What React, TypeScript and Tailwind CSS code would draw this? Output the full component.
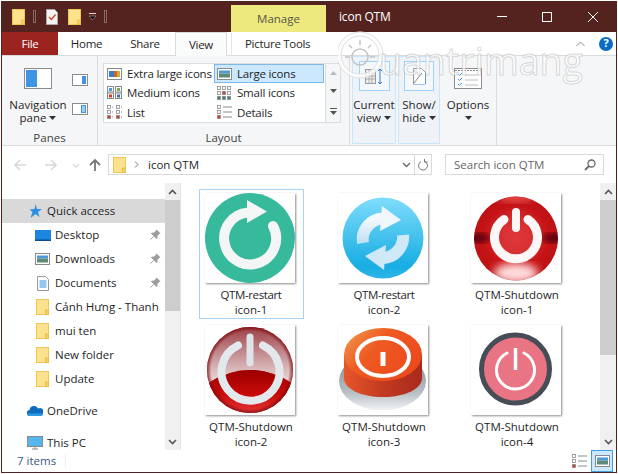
import React from "react";

const Folder = ({ className = "" }: { className?: string }) => (
  <svg viewBox="0 0 13 16" width="13" height="16" className={className}>
    <rect x="0.5" y="0.5" width="12" height="15" fill="#fde28e" stroke="#eec653" />
    <rect x="9.5" y="11" width="3" height="4.5" fill="#f7cf5e" stroke="#e5b93f" strokeWidth="0.7" />
  </svg>
);

const Caret = ({ className = "" }: { className?: string }) => (
  <svg viewBox="0 0 7 4" width="7" height="4" className={className}>
    <path d="M0 0h7L3.5 4z" fill="#333" />
  </svg>
);

const SmallView = ({ kind }: { kind: string }) => {
  const c = "#8a8a8a";
  if (kind === "xl")
    return (
      <svg width="15" height="12" viewBox="0 0 15 12">
        <rect x=".5" y=".5" width="14" height="11" fill="#fff" stroke={c} />
        <rect x="2" y="3" width="5" height="6" fill="#3a7fc8" />
        <rect x="7" y="3" width="3" height="6" fill="#d9602a" />
        <rect x="10" y="3" width="3" height="6" fill="#c8b040" />
      </svg>
    );
  if (kind === "lg")
    return (
      <svg width="15" height="12" viewBox="0 0 15 12">
        <rect x=".5" y=".5" width="14" height="11" fill="#fff" stroke={c} />
        <rect x="2" y="2.5" width="11" height="3" fill="#4c9ad8" />
        <rect x="2" y="5.5" width="11" height="4" fill="#5f8a78" />
      </svg>
    );
  if (kind === "md")
    return (
      <svg width="15" height="13" viewBox="0 0 15 13">
        <rect x=".5" y=".5" width="6" height="5.5" fill="#fff" stroke={c} />
        <rect x="8.5" y=".5" width="6" height="5.5" fill="#fff" stroke={c} />
        <rect x=".5" y="7" width="6" height="5.5" fill="#fff" stroke={c} />
        <rect x="8.5" y="7" width="6" height="5.5" fill="#fff" stroke={c} />
        <rect x="2" y="2" width="3" height="3" fill="#4c9ad8" />
        <rect x="10" y="2" width="3" height="3" fill="#7aa860" />
        <rect x="2" y="8.5" width="3" height="3" fill="#d83a2a" />
        <rect x="10" y="8.5" width="3" height="3" fill="#3a6fb8" />
      </svg>
    );
  if (kind === "sm")
    return (
      <svg width="15" height="14" viewBox="0 0 15 14">
        {[0, 5, 10].map((y) =>
          [0, 5, 10].map((x) => (
            <rect key={`${x}-${y}`} x={x + 0.5} y={y + 0.5} width="3" height="3" fill={x === 5 && y === 5 ? "#d83a2a" : y === 10 ? "#3a7f78" : "#fff"} stroke={c} strokeWidth=".8" />
          )),
        )}
      </svg>
    );
  if (kind === "list")
    return (
      <svg width="15" height="14" viewBox="0 0 15 14">
        {[0, 5, 10].map((y) =>
          [0, 9].map((x) => (
            <g key={`${x}-${y}`}>
              <rect x={x + 0.5} y={y + 0.5} width="3" height="3" fill={y === 10 ? "#d83a2a" : "#fff"} stroke={c} strokeWidth=".8" />
              <path d={`M${x + 5} ${y + 2}h1`} stroke={c} />
            </g>
          )),
        )}
      </svg>
    );
  return (
    <svg width="15" height="14" viewBox="0 0 15 14">
      {[0, 5, 10].map((y) => (
        <g key={y}>
          <rect x=".5" y={y + 0.5} width="3" height="3" fill={y === 10 ? "#d83a2a" : "#fff"} stroke={c} strokeWidth=".8" />
          <path d={`M6 ${y + 2}h9`} stroke={c} />
        </g>
      ))}
    </svg>
  );
};

const Item = ({ kind, label, active }: { kind: string; label: string; active?: boolean }) => (
  <div className={`flex h-5 w-[110px] items-center gap-[5px] pl-[3px] tracking-[-0.2px] ${active ? "bg-[#cce8ff] outline outline-1 -outline-offset-1 outline-[#7db8e8]" : ""}`}>
    <div className="flex w-[15px] justify-center">
      <SmallView kind={kind} />
    </div>
    <span className="whitespace-nowrap">{label}</span>
  </div>
);

const Pin = () => (
  <svg width="11" height="11" viewBox="0 0 11 11" className="absolute left-[148px] top-[6px]">
    <path d="M6.5 0.5l4 4-1.2.6-2 2 .2 2L6.6 10 1 4.4 1.900 3.500l2 .2 2-2z" fill="#9c9c9c" />
    <path d="M3.500 7.500L0.500 10.500" stroke="#9c9c9c" />
  </svg>
);

const NavRow = ({ icon, label, pin, cls = "pl-[32px]" }: { icon: React.ReactNode; label: string; pin?: boolean; cls?: string }) => (
  <div className={`relative flex h-6 items-center whitespace-nowrap ${cls}`}>
    <div className="mr-[4px] flex w-[17px] justify-center">{icon}</div>
    <span className="overflow-hidden">{label}</span>
    {pin && <Pin />}
  </div>
);

const ScrollBar = ({ thumb, className = "" }: { thumb: string; className?: string }) => (
  <div className={`relative flex w-[16px] shrink-0 flex-col bg-[#f0f0f0] ${className}`}>
    <div className="flex h-[17px] items-center justify-center">
      <svg width="9" height="6" viewBox="0 0 9 6"><path d="M1 5l3.500-3.500L8 5" fill="none" stroke="#555" strokeWidth="1.600" /></svg>
    </div>
    <div className={`bg-[#cdcdcd] ${thumb}`} />
    <div className="flex-1" />
    <div className="flex h-[17px] items-center justify-center">
      <svg width="9" height="6" viewBox="0 0 9 6"><path d="M1 1l3.500 3.500L8 1" fill="none" stroke="#555" strokeWidth="1.600" /></svg>
    </div>
  </div>
);

const Restart1 = () => (
  <svg viewBox="0 0 90 90" width="90" height="90">
    <circle cx="45" cy="45" r="45" fill="#37b99c" />
    <path d="M43 19.500A26 26 0 1 0 68 33" fill="none" stroke="#f4f6f6" strokeWidth="10" strokeLinecap="round" />
    <path d="M42 7l20 11.500L42 30z" fill="#f4f6f6" />
  </svg>
);

const Restart2 = () => (
  <svg viewBox="0 0 90 90" width="90" height="90">
    <defs>
      <linearGradient id="b1" x1="0" y1="0" x2="0" y2="1">
        <stop offset="0" stopColor="#7fdcfb" />
        <stop offset="0.85" stopColor="#18ade3" />
        <stop offset="1" stopColor="#2cb6e8" />
      </linearGradient>
      <linearGradient id="b2" x1="0" y1="0" x2="0" y2="1">
        <stop offset="0" stopColor="#f4f9fc" />
        <stop offset="1" stopColor="#bfe0f5" />
      </linearGradient>
    </defs>
    <circle cx="45" cy="45" r="40.500" fill="url(#b1)" />
    <path d="M25 50A21 21 0 0 1 45 25.500" fill="none" stroke="url(#b2)" strokeWidth="12" />
    <path d="M44 13l19 14-21 11z" fill="#f0f7fc" />
    <path d="M65 42A21 21 0 0 1 45 65" fill="none" stroke="#d0e9f8" strokeWidth="12" />
    <path d="M46 77L27 63l21-11z" fill="#cfe8f8" />
  </svg>
);

const Shutdown1 = () => (
  <svg viewBox="0 0 90 90" width="90" height="90">
    <defs>
      <radialGradient id="r1" cx="0.5" cy="0.5" r="0.5">
        <stop offset="0" stopColor="#d9272a" />
        <stop offset="0.55" stopColor="#cc1417" />
        <stop offset="1" stopColor="#bd1215" />
      </radialGradient>
      <filter id="f1"><feGaussianBlur stdDeviation="4" /></filter>
      <filter id="f2"><feGaussianBlur stdDeviation="3" /></filter>
      <clipPath id="c1"><circle cx="45" cy="45.500" r="42" /></clipPath>
    </defs>
    <circle cx="45" cy="45.500" r="42" fill="url(#r1)" />
    <g clipPath="url(#c1)">
      <ellipse cx="6" cy="45" rx="14" ry="5" fill="#5c0608" filter="url(#f2)" />
      <ellipse cx="84" cy="45" rx="14" ry="5" fill="#5c0608" filter="url(#f2)" />
      <ellipse cx="45" cy="80" rx="22" ry="10" fill="#ffdcdc" filter="url(#f1)" />
      <ellipse cx="45" cy="44" rx="26" ry="26" fill="#f07070" opacity=".25" filter="url(#f1)" />
      <ellipse cx="45" cy="5" rx="18" ry="5" fill="#f05a5a" opacity=".7" filter="url(#f2)" />
    </g>
    <path d="M33 26.500A21.500 21.500 0 1 0 57 26.500" fill="none" stroke="#fdf6f6" strokeWidth="9" strokeLinecap="round" />
    <path d="M45 19v16" stroke="#fdf6f6" strokeWidth="8" strokeLinecap="round" />
  </svg>
);

const Shutdown2 = () => (
  <svg viewBox="0 0 90 90" width="90" height="90">
    <defs>
      <linearGradient id="s1" x1="0" y1="0" x2="0" y2="1">
        <stop offset="0" stopColor="#9a3a40" />
        <stop offset="0.55" stopColor="#c99a9c" />
        <stop offset="1" stopColor="#f0e2e2" />
      </linearGradient>
      <linearGradient id="s2" x1="0" y1="0" x2="0" y2="1">
        <stop offset="0" stopColor="#9c0000" />
        <stop offset="0.55" stopColor="#c90a0a" />
        <stop offset="1" stopColor="#e83a3a" />
      </linearGradient>
      <radialGradient id="s3" cx="0.5" cy="0.5" r="0.5">
        <stop offset="0.9" stopColor="#8a0a10" stopOpacity="0" />
        <stop offset="1" stopColor="#7a0a10" stopOpacity=".8" />
      </radialGradient>
      <clipPath id="c2"><circle cx="45" cy="45" r="43" /></clipPath>
    </defs>
    <circle cx="45" cy="45" r="43" fill="#b02020" />
    <g clipPath="url(#c2)">
      <path d="M0 0h90v60Q45 30 0 60z" fill="url(#s1)" />
      <path d="M0 60Q45 30 90 60V90H0z" fill="url(#s2)" />
    </g>
    <circle cx="45" cy="45" r="43" fill="url(#s3)" />
    <path d="M33 20.500A29 29 0 1 0 58 20.500" fill="none" stroke="#e2e8ec" strokeWidth="8" strokeLinecap="round" />
    <path d="M45 12v26" stroke="#dde4e8" strokeWidth="7" strokeLinecap="round" />
  </svg>
);

const Shutdown3 = () => (
  <svg viewBox="0 0 90 90" width="90" height="90">
    <defs>
      <linearGradient id="o1" x1="0" y1="0" x2="1" y2="0.6">
        <stop offset="0" stopColor="#f0a050" />
        <stop offset="0.45" stopColor="#ee5a22" />
        <stop offset="1" stopColor="#ec4a1c" />
      </linearGradient>
      <linearGradient id="o2" x1="0" y1="0" x2="1" y2="0">
        <stop offset="0" stopColor="#e8562a" />
        <stop offset="0.5" stopColor="#c23a22" />
        <stop offset="1" stopColor="#a82a1c" />
      </linearGradient>
      <linearGradient id="o3" x1="0" y1="0" x2="0" y2="1">
        <stop offset="0" stopColor="#777f87" />
        <stop offset="0.7" stopColor="#b9bfc5" />
        <stop offset="1" stopColor="#f2f4f6" />
      </linearGradient>
    </defs>
    <ellipse cx="44.500" cy="56" rx="43.500" ry="29.500" fill="url(#o3)" />
    <path d="M6 30v23c0 11 17 19 39 19s39-8 39-19V30z" fill="url(#o2)" />
    <ellipse cx="45" cy="29.500" rx="39" ry="26.500" fill="url(#o1)" />
    <ellipse cx="45" cy="32" rx="26" ry="19" fill="none" stroke="#fff" strokeWidth="4" />
    <rect x="42.500" y="27" width="5" height="14" fill="#fff" />
  </svg>
);

const Shutdown4 = () => (
  <svg viewBox="0 0 90 90" width="90" height="90">
    <circle cx="44.500" cy="44" r="34" fill="#e87484" stroke="#464d57" strokeWidth="5" />
    <path d="M36 28A19 19 0 1 0 53 28" fill="none" stroke="#fff" strokeWidth="3" strokeLinecap="round" />
    <path d="M44.500 23v22" stroke="#fff" strokeWidth="3.500" />
  </svg>
);

const Thumb = ({ children, l1, l2, sel }: { children: React.ReactNode; l1: string; l2: string; sel?: boolean }) => (
  <div className={`flex h-[130px] w-[105px] flex-col items-center pr-[3px] pt-[4px] ${sel ? "outline outline-1 -outline-offset-1 outline-[#a9d2f3]" : ""}`}>
    <div className="h-[90px] w-[90px] bg-white shadow-[1px_1px_2px_rgba(0,0,0,0.45)]">{children}</div>
    <div className="ml-[2px] mt-[4px] text-center leading-[15px]">
      <div className={l1 === "QTM-restart" ? "tracking-[-0.4px]" : ""}>{l1}</div>
      <div>{l2}</div>
    </div>
  </div>
);

const TallLabel = ({ a, b, caret = true }: { a: string; b: string; caret?: boolean }) => (
  <div className="flex flex-col items-center leading-[13px]">
    <span>{a}</span>
    <span className="flex h-[13px] items-center gap-[3px]">
      {b}
      {caret && <Caret />}
    </span>
  </div>
);

export default function App() {
  return (
    <div
      className="relative ml-px mt-px flex h-[472px] w-[616px] flex-col overflow-hidden border border-[#55231f] bg-white text-[11.5px] text-[#1f1f1f]"
      style={{ fontFamily: '"Open Sans","Noto Sans",sans-serif' }}
    >
      {/* title bar */}
      <div className="flex h-[30px] shrink-0 items-end bg-[#55231f]">
        <div className="flex h-[30px] w-[229px] items-center pb-[1px]">
          <Folder className="ml-[10px]" />
          <div className="ml-[8px] h-[13px] w-[3px] border border-[#8a6a66]" />
          <svg width="12" height="16" viewBox="0 0 12 16" className="ml-[10px]">
            <path d="M.5.500h8l3 3v12H.5z" fill="#f4f4f4" stroke="#aaa" />
            <path d="M3 8l2.500 2.500L9.500 5.500" fill="none" stroke="#d8402a" strokeWidth="1.300" />
          </svg>
          <Folder className="ml-[10px]" />
          <svg width="7" height="8" viewBox="0 0 7 8" className="ml-[8px]">
            <path d="M0 0h7v1H0z" fill="#ddd" />
            <path d="M0 3h7L3.500 7z" fill="#111" stroke="#ddd" strokeWidth=".4" />
          </svg>
          <div className="ml-[8px] h-[13px] w-[3px] border border-[#8a6a66]" />
        </div>
        <div className="flex h-[27px] w-[95px] items-center justify-center bg-[#eee97e] text-[#55554a]">Manage</div>
        <div className="flex h-[30px] flex-1 items-center pl-[13px] text-[12px] tracking-[-0.2px] text-white">icon QTM</div>
        <div className="flex h-[30px] items-center">
          <svg width="120" height="14" viewBox="0 0 120 14">
            <path d="M1 6.500h10" stroke="#fff" />
            <rect x="46.500" y="2.500" width="9" height="9" fill="none" stroke="#fff" />
            <path d="M92 2l10 10M102 2L92 12" stroke="#fff" />
          </svg>
        </div>
      </div>

      {/* tabs */}
      <div className="flex h-[23px] shrink-0 items-stretch bg-white tracking-[-0.3px]">
        <div className="flex w-[56px] items-center justify-center bg-[#9b2420] text-white">File</div>
        <div className="flex w-[57px] items-center justify-center">Home</div>
        <div className="flex w-[60px] items-center justify-center">Share</div>
        <div className="z-10 -mb-px flex w-[52px] items-center justify-center border-x border-t border-[#dadbdc] bg-[#fafbfb]">View</div>
        <div className="ml-[4px] mt-[1px] w-px bg-[#e4e4e4]" />
        <div className="ml-[13px] flex items-center">Picture Tools</div>
        <div className="flex-1" />
        <div className="flex items-center">
          <svg width="9" height="6" viewBox="0 0 9 6" className="mr-[14px]"><path d="M.5 5L4.500 1l4 4" fill="none" stroke="#888" /></svg>
          <div className="mr-[3px] flex h-[14px] w-[14px] items-center justify-center rounded-full bg-[#0a6cc4] text-[11px] font-bold text-white">?</div>
        </div>
      </div>

      {/* ribbon */}
      <div className="flex h-[91px] shrink-0 border-y border-[#dadbdc] bg-[#f5f6f7]">
        <div className="flex h-[89px] w-[96px] flex-col border-r border-[#dadbdc]">
          <div className="flex flex-1">
            <div className="ml-[6px] flex w-[60px] flex-col items-center pt-[12px]">
              <svg width="28" height="21" viewBox="0 0 28 21">
                <rect x=".5" y=".5" width="27" height="20" fill="#fff" stroke="#8c8c8c" />
                <rect x="2" y="2" width="11" height="17" fill="#3f95e4" />
              </svg>
              <div className="mt-[9px]">
                <TallLabel a="Navigation" b="pane" />
              </div>
            </div>
            <div className="ml-[4px] flex flex-col pt-[18px]">
              <svg width="16" height="12" viewBox="0 0 16 12">
                <rect x=".5" y=".5" width="15" height="11" fill="#fff" stroke="#8c8c8c" />
                <rect x="10" y="2" width="4" height="8" fill="#3f95e4" />
              </svg>
              <svg width="16" height="12" viewBox="0 0 16 12" className="mt-[17px]">
                <rect x=".5" y=".5" width="15" height="11" fill="#fff" stroke="#8c8c8c" />
                <rect x="9" y="2" width="5" height="8" fill="#3f95e4" />
                <path d="M10 4h3M10 6h3M10 8h3" stroke="#fff" />
              </svg>
            </div>
          </div>
          <div className="h-[15px] text-center leading-[15px] text-[#444]">Panes</div>
        </div>

        <div className="flex h-[89px] w-[252px] flex-col border-r border-[#dadbdc]">
          <div className="ml-[5px] mt-[7px] flex h-[60px] w-[238px] border border-[#dadbdc] bg-white">
            <div className="flex flex-col">
              <Item kind="xl" label="Extra large icons" />
              <Item kind="md" label="Medium icons" />
              <Item kind="list" label="List" />
            </div>
            <div className="flex flex-col">
              <Item kind="lg" label="Large icons" active />
              <Item kind="sm" label="Small icons" />
              <Item kind="det" label="Details" />
            </div>
            <div className="ml-auto flex w-[15px] flex-col items-center justify-around border-l border-[#dadbdc] bg-[#f5f6f7]">
              <svg width="7" height="4" viewBox="0 0 7 4"><path d="M0 4h7L3.500 0z" fill="#bbb" /></svg>
              <svg width="7" height="4" viewBox="0 0 7 4"><path d="M0 0h7L3.500 4z" fill="#555" /></svg>
              <svg width="7" height="7" viewBox="0 0 7 7"><path d="M0 .500h7" stroke="#555" /><path d="M0 3h7L3.500 7z" fill="#555" /></svg>
            </div>
          </div>
          <div className="mt-auto h-[15px] text-center leading-[15px] text-[#444]">Layout</div>
        </div>

        <div className="ml-[2px] flex h-[88px] w-[44px] flex-col items-center border border-[#cbe6fa] bg-[#eff3f7] pt-[4px]">
          <div className="flex h-[30px] w-[31px] items-center justify-center border border-[#9ad4f8] bg-[#f5f8fb]">
            <svg width="18" height="17" viewBox="0 0 18 17">
              <rect x=".5" y="1.500" width="10" height="14" fill="#eee" stroke="#999" />
              <path d="M1 5h9M1 8h9M1 11h9M4 2v13M7 2v13" stroke="#aaa" />
              <path d="M15 1v15M13 3l2-2 2 2M13 14l2 2 2-2" fill="none" stroke="#2a7fd0" />
            </svg>
          </div>
          <div className="mt-[7px]">
            <TallLabel a="Current" b="view" />
          </div>
        </div>
        <div className="ml-[2px] flex h-[88px] w-[42px] flex-col items-center border border-[#cbe6fa] bg-[#eff3f7] pt-[4px]">
          <div className="flex h-[30px] w-[30px] items-center justify-center border border-[#9ad4f8] bg-[#f5f8fb]">
            <svg width="13" height="17" viewBox="0 0 13 17">
              <path d="M.5 16V.500h8l4 4V16" fill="#fff" stroke="#999" />
              <path d="M.5 16.500h12M12.500 5v11" stroke="#3f95e4" strokeDasharray="1 1" />
              <path d="M1 15L9 5" stroke="#888" />
            </svg>
          </div>
          <div className="mt-[7px]">
            <TallLabel a="Show/" b="hide" />
          </div>
        </div>
        <div className="flex h-[89px] w-[57px] flex-col items-center border-r border-[#dadbdc] pt-[12px]">
          <svg width="28" height="21" viewBox="0 0 28 21">
            <rect x=".5" y=".5" width="27" height="20" fill="#fff" stroke="#8c8c8c" />
            <path d="M1 2.500h26" stroke="#8c8c8c" strokeDasharray="2 1" />
            <path d="M4 6l1.500 1.500L8 5M4 11l1.500 1.500L8 10M4 16l1.500 1.500L8 15" fill="none" stroke="#3f95e4" />
            <path d="M11 7h13M11 12h13M11 17h13" stroke="#bbb" />
          </svg>
          <div className="mt-[9px]">
            <div className="flex flex-col items-center leading-[13px]">
              <span>Options</span>
              <span className="flex h-[13px] items-center"><Caret /></span>
            </div>
          </div>
        </div>
      </div>

      {/* address */}
      <div className="flex h-[37px] shrink-0 items-center bg-white">
        <svg width="100" height="14" viewBox="0 0 100 14" className="ml-[11px] shrink-0">
          <path d="M2 7h11M7 2L2 7l5 5" fill="none" stroke="#d8d8d8" strokeWidth="1.600" />
          <path d="M32 7h11M38 2l5 5-5 5" fill="none" stroke="#d8d8d8" strokeWidth="1.600" />
          <path d="M60 6l3 3 3-3" fill="none" stroke="#d8d8d8" strokeWidth="1.300" />
          <path d="M82 13V2M77 7l5-5 5 5" fill="none" stroke="#777" strokeWidth="1.800" />
        </svg>
        <div className="ml-[-5px] flex h-[21px] w-[324px] items-center border border-[#d9d9d9]">
          <Folder className="ml-[4px]" />
          <svg width="5" height="7" viewBox="0 0 5 7" className="ml-[8px]"><path d="M1 .500l3 3-3 3" fill="none" stroke="#777" /></svg>
          <span className="ml-[9px]">icon QTM</span>
          <svg width="9" height="6" viewBox="0 0 9 6" className="ml-auto mr-[3px]"><path d="M1 1l3.500 3.500L8 1" fill="none" stroke="#666" strokeWidth="1.300" /></svg>
          <div className="flex h-full w-[17px] items-center justify-center border-l border-[#d9d9d9]">
            <svg width="11" height="12" viewBox="0 0 11 12"><path d="M3 2.500a4.500 4.500 0 1 0 4 0M6.500 0v3h3" fill="none" stroke="#777" /></svg>
          </div>
        </div>
        <div className="ml-[13px] flex h-[21px] w-[159px] items-center border border-[#d9d9d9] pl-[8px] text-[#666]">
          <span>Search icon QTM</span>
          <svg width="12" height="12" viewBox="0 0 12 12" className="ml-auto mr-[7px]">
            <circle cx="7.500" cy="4.500" r="3.500" fill="none" stroke="#666" strokeWidth="1.300" />
            <path d="M5 7L1 11" stroke="#666" strokeWidth="1.800" />
          </svg>
        </div>
      </div>

      {/* main */}
      <div className="flex min-h-0 flex-1">
        <div className="relative w-[163px] shrink-0 overflow-hidden pt-[16px]">
          <NavRow
            cls="pl-[24px] bg-[#d9d9d9]"
            icon={<svg width="15" height="14" viewBox="0 0 15 14"><path d="M8.500 0l1.500 5h5l-4 3 1.500 5-4-3-5 4 2-6-3-2.500 5-.5z" fill="#2e8fe0" /></svg>}
            label="Quick access"
          />
          <NavRow pin icon={<svg width="16" height="11" viewBox="0 0 16 11"><rect width="16" height="11" fill="#1c86e0" /><rect y="9.500" width="16" height="1.500" fill="#0a4a90" /></svg>} label="Desktop" />
          <NavRow pin icon={<SmallView kind="lg" />} label="Downloads" />
          <NavRow pin icon={<svg width="12" height="15" viewBox="0 0 12 15"><path d="M.5.500h8l3 3v11H.5z" fill="#fff" stroke="#999" /><path d="M2.500 5h7M2.500 7h7M2.500 9h7M2.500 11h7" stroke="#2e8fe0" /></svg>} label="Documents" />
          <NavRow icon={<Folder />} label="Cảnh Hưng - Thanh" />
          <NavRow icon={<Folder />} label="mui ten" />
          <NavRow icon={<Folder />} label="New folder" />
          <NavRow icon={<Folder />} label="Update" />
          <div className="mt-[8px]">
            <NavRow cls="pl-[24px]" icon={<svg width="16" height="10" viewBox="0 0 16 10"><path d="M3 10a3 3 0 0 1-.500-6 4.500 4.500 0 0 1 8.500-1.500A3.500 3.500 0 0 1 16 7q0 3-3 3z" fill="#0f6cbd" /><path d="M0 7.500h16V8a2 2 0 0 1-2 2H3a3 3 0 0 1-3-2.500z" fill="#2e9be6" /></svg>} label="OneDrive" />
          </div>
          <div className="mt-[8px]">
            <NavRow cls="pl-[24px]" icon={<svg width="16" height="14" viewBox="0 0 16 14"><rect x=".5" y=".5" width="15" height="10" fill="#55b8ec" stroke="#8a8a8a" /><path d="M5 13h6M8 11v2" stroke="#8a8a8a" /></svg>} label="This PC" />
          </div>
        </div>
        <ScrollBar thumb="h-[111px]" className="border-r border-[#e4e4e4]" />
        <div className="min-w-0 flex-1 overflow-hidden pl-[18px] pt-[6px]">
          <div className="grid grid-cols-[105px_105px_105px] gap-x-[28px] gap-y-[2px]">
            <Thumb sel l1="QTM-restart" l2="icon-1"><Restart1 /></Thumb>
            <Thumb l1="QTM-restart" l2="icon-2"><Restart2 /></Thumb>
            <Thumb l1="QTM-Shutdown" l2="icon-1"><Shutdown1 /></Thumb>
            <Thumb l1="QTM-Shutdown" l2="icon-2"><Shutdown2 /></Thumb>
            <Thumb l1="QTM-Shutdown" l2="icon-3"><Shutdown3 /></Thumb>
            <Thumb l1="QTM-Shutdown" l2="icon-4"><Shutdown4 /></Thumb>
          </div>
        </div>
        <ScrollBar thumb="h-[155px]" />
      </div>

      {/* status */}
      <div className="flex h-[22px] shrink-0 items-center bg-white text-[#3a5a80]">
        <span className="ml-[15px]">7 items</span>
        <div className="ml-[9px] h-[14px] w-px bg-[#eee]" />
        <div className="ml-auto flex items-center">
          <SmallView kind="det" />
          <div className="ml-[4px] mr-[3px] flex h-[22px] w-[22px] items-center justify-center border border-[#3f9fe0] bg-[#cce8ff]">
            <SmallView kind="lg" />
          </div>
        </div>
      </div>

      {/* watermark */}
      <div className="pointer-events-none absolute left-[336px] top-[29px] flex items-end">
        <svg width="46" height="52" viewBox="0 0 46 52">
          <circle cx="22" cy="24" r="21" fill="none" stroke="#fff" strokeWidth="5" opacity=".8" />
          <circle cx="22" cy="24" r="23" fill="none" stroke="#c4c4c4" strokeWidth="1" opacity=".6" />
          <circle cx="22" cy="24" r="19" fill="none" stroke="#c4c4c4" strokeWidth="1" opacity=".6" />
          <circle cx="22" cy="26" r="8" fill="none" stroke="#c4c4c4" strokeWidth="1.500" />
          <path d="M22 9v5M11 14l3 3M33 14l-3 3M7 26h5M32 26h5" stroke="#c4c4c4" strokeWidth="1.500" />
        </svg>
        <span className="ml-[-5px] text-[37.5px] leading-[44px] text-white/70 [-webkit-text-stroke:1px_rgba(170,170,170,0.45)]">uantrimang</span>
      </div>
    </div>
  );
}
